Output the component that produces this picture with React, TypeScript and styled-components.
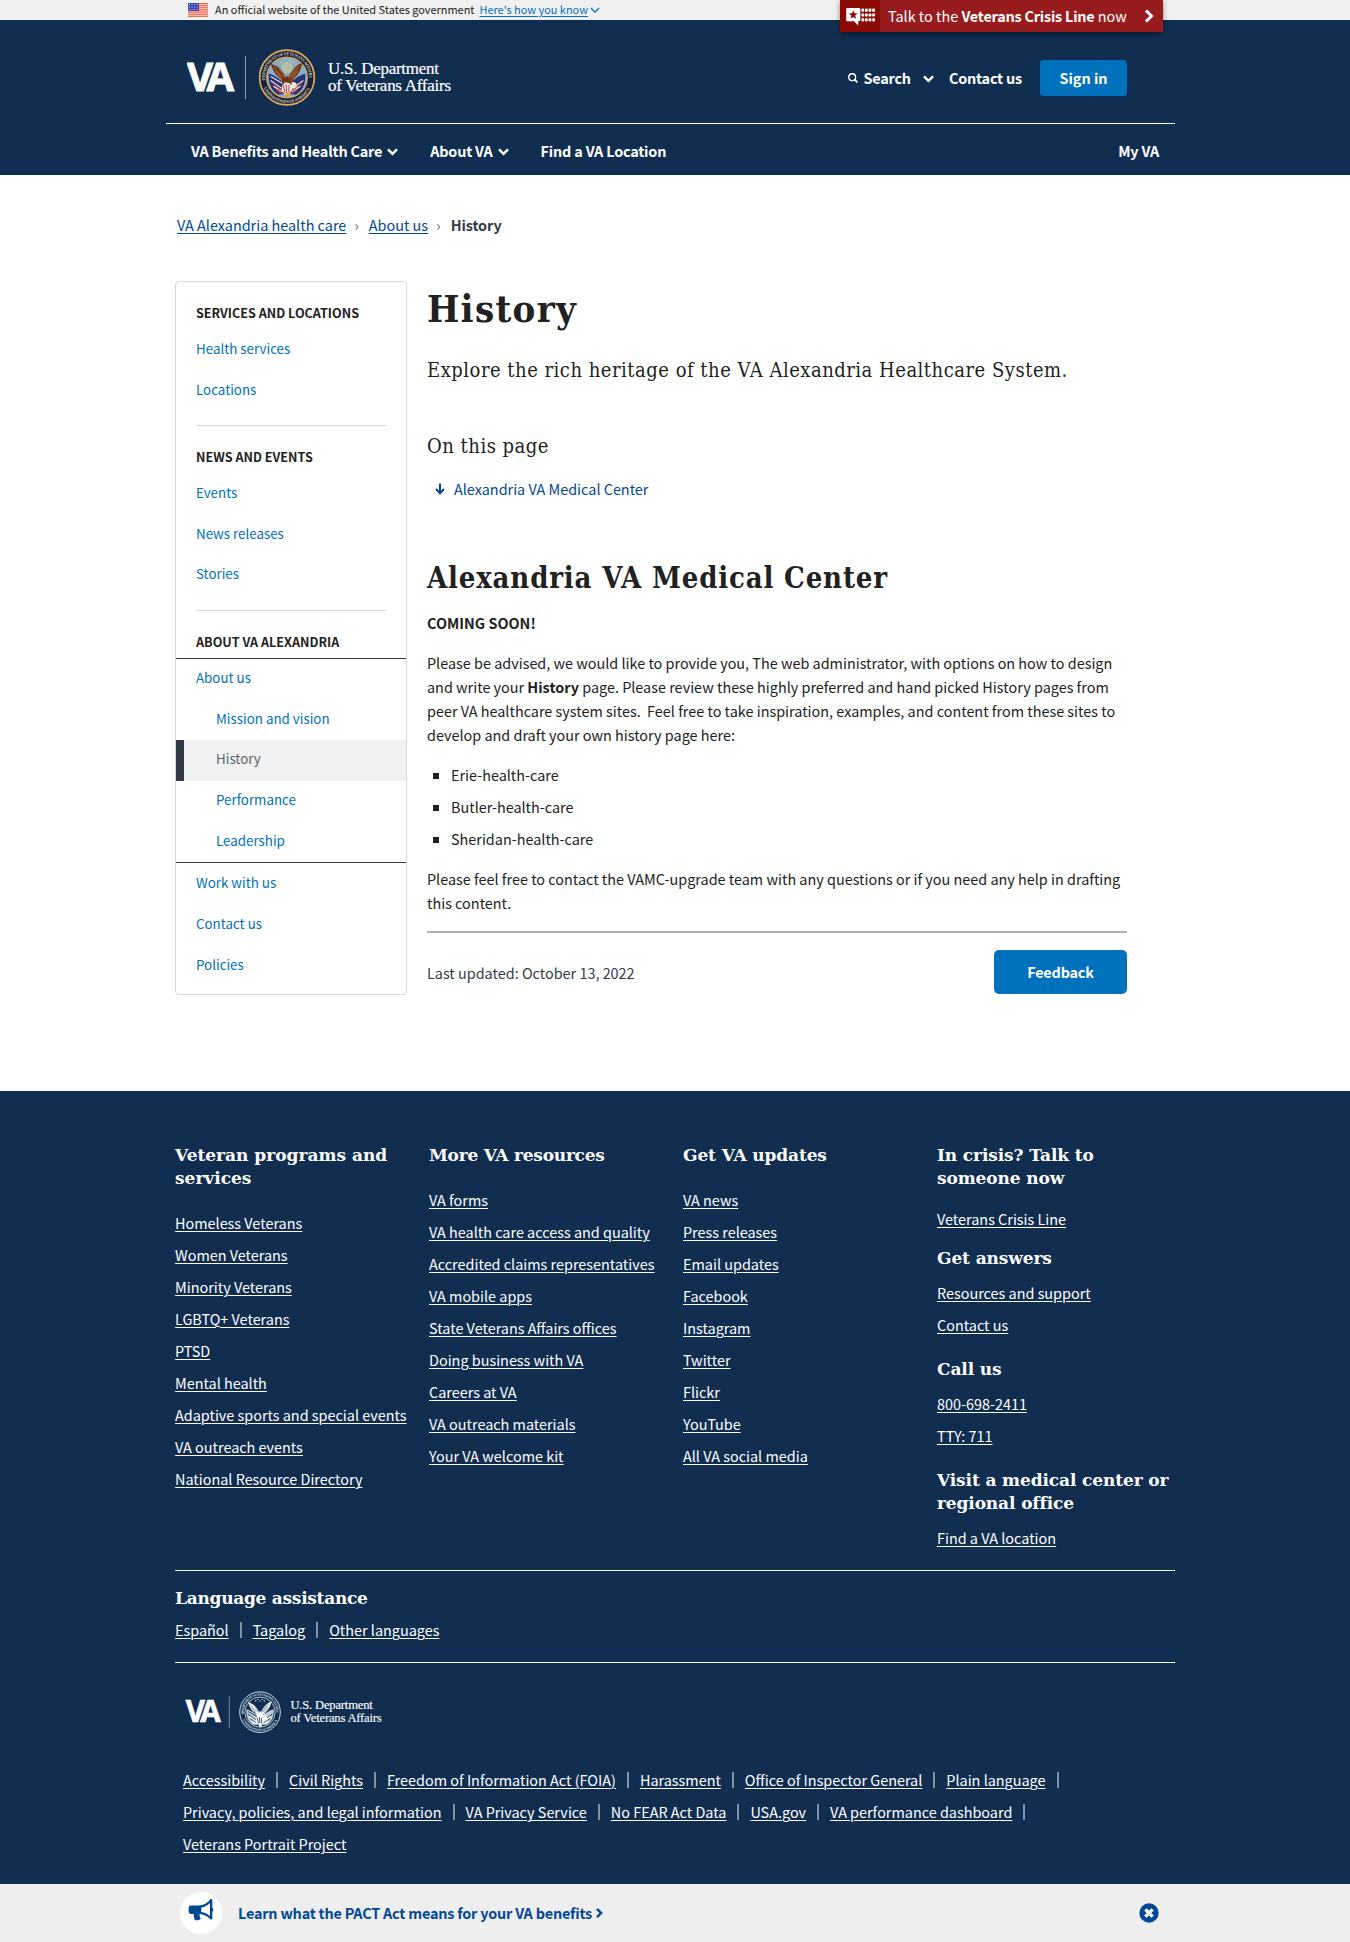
import React from 'react';
import styled, { createGlobalStyle } from 'styled-components';

const sans = '"Noto Sans CJK SC", "Noto Sans", sans-serif';
const slab = '"DejaVu Serif Condensed", "DejaVu Serif", serif';
const slabWide = '"DejaVu Serif", serif';

const GlobalStyle = createGlobalStyle`
  *, *::before, *::after { box-sizing: border-box; }
  body {
    margin: 0;
    background: #fff;
    color: #212121;
    font-family: ${sans};
    font-size: 14.42px;
    line-height: 24px;
  }
  h1, h2, h3, h4, p, ul { margin: 0; padding: 0; }
  ul { list-style: none; }
  svg { display: block; flex: none; }
`;

/* ---------- Government banner ---------- */

const GovBanner = styled.div`
  height: 20px;
  background: #f0f0f0;
  padding: 0 187px 0 188px;
  display: flex;
  align-items: flex-start;
  font-size: 10.95px;
  line-height: 19px;
`;

const GovText = styled.span`
  margin: 0 5px 0 7px;
`;

const GovLink = styled.a`
  color: #0071bc;
  text-decoration: underline;
  text-underline-offset: 2px;
  display: flex;
  align-items: center;
  gap: 2px;
`;

const FlagIcon = styled.svg`
  margin-top: 3px;
`;

const CrisisButton = styled.a`
  position: absolute;
  top: 0;
  left: 840px;
  width: 323px;
  height: 32px;
  display: flex;
  align-items: center;
  background: #981b1e;
  color: #fff;
  font-size: 14.42px;
  line-height: 30px;
  box-shadow: 0 2px 5px rgba(0, 0, 0, 0.45);
  b { letter-spacing: -0.21px; }
`;

const CrisisIconBox = styled.span`
  width: 40px;
  height: 32px;
  background: #8b0a03;
  display: flex;
  justify-content: center;
  align-items: center;
  margin-right: 8px;
`;

const CrisisText = styled.span`
  flex: 1;
  white-space: nowrap;
`;

const CrisisArrow = styled.svg`
  margin-right: 9px;
`;

/* ---------- Header ---------- */

const Header = styled.header`
  height: 155px;
  background: #112e51;
  color: #fff;
  padding: 0 175px 0 166px;
  font-weight: 700;
  letter-spacing: -0.19px;
`;

const HeaderTop = styled.div`
  height: 104px;
  border-bottom: 1px solid #fff;
  display: flex;
  justify-content: space-between;
  padding: 29px 48px 0 21px;
`;

const HeaderTools = styled.div`
  display: flex;
  align-items: center;
  height: 36px;
  margin-top: 11px;
`;

const SearchToggle = styled.span`
  display: flex;
  align-items: center;
  margin-right: 15px;
  span { margin: 0 12px 0 5px; }
`;

const SignIn = styled.button`
  width: 87px;
  height: 36px;
  margin-left: 18px;
  border: 0;
  border-radius: 4px;
  background: #0071bc;
  color: #fff;
  font: 700 14.42px/34px ${sans};
  padding: 0;
`;

const NavBar = styled.nav`
  display: flex;
  align-items: center;
  height: 51px;
  padding: 3px 16px 0 25px;
`;

const NavItem = styled.a<{ $gap?: number; $end?: boolean }>`
  display: flex;
  align-items: center;
  gap: 5px;
  margin-right: ${p => p.$gap ?? 0}px;
  margin-left: ${p => (p.$end ? 'auto' : '0')};
`;

/* ---------- Page body ---------- */

const Breadcrumbs = styled.nav`
  display: flex;
  height: 106px;
  padding: 38px 0 0 177px;
  a { color: #004795; text-decoration: underline; text-underline-offset: 2px; }
  i { font-style: normal; color: #5b616b; width: 22.5px; text-align: center; padding-right: 2px; }
  b { color: #323a45; letter-spacing: -0.1px; }
`;

const Body = styled.div`
  display: grid;
  grid-template-columns: 232px 700px;
  column-gap: 20px;
  align-items: start;
  padding: 0 0 96px 175px;
`;

const Sidebar = styled.aside`
  height: 714px;
  border: 1px solid #d6d7d9;
  border-radius: 4px;
  overflow: hidden;
`;

const SideSection = styled.section<{ $ruled?: boolean }>`
  padding: 20px 0 ${p => (p.$ruled ? 14.7 : 0)}px;
  &::after {
    content: '';
    display: ${p => (p.$ruled ? 'block' : 'none')};
    height: 1px;
    margin: 14.7px 20px -14.7px;
    background: #d6d7d9;
  }
`;

const SideHeading = styled.h2`
  font-size: 12.6px;
  line-height: 21px;
  margin: 0 20px 6px;
  font-weight: 700;
  white-space: nowrap;
`;

const SideItem = styled.a<{ $nested?: boolean; $current?: boolean }>`
  display: block;
  height: 40.7px;
  line-height: 39px;
  font-size: 13.35px;
  padding-left: ${p => (p.$current ? 32 : p.$nested ? 40 : 20)}px;
  color: ${p => (p.$current ? '#5b616b' : '#0071bc')};
  background: ${p => (p.$current ? '#f1f1f1' : 'transparent')};
  border-left: ${p => (p.$current ? '8px solid #323a45' : '0')};
`;

const SideGroup = styled.div`
  border-top: 1px solid #323a45;
  border-bottom: 1px solid #323a45;
  a { line-height: 38px; }
`;

const Article = styled.article`
  display: flex;
  flex-direction: column;
`;

const Title = styled.h1`
  font: 700 38px/52px ${slab};
  letter-spacing: 1.3px;
  margin-top: 2px;
`;

const Lede = styled.p<{ $top: number }>`
  font: 400 20px/30px ${slab};
  letter-spacing: 0.5px;
  margin-top: ${p => p.$top}px;
  white-space: nowrap;
`;

const JumpLink = styled.a`
  display: flex;
  align-items: center;
  gap: 9px;
  margin: 16px 0 0 8px;
  color: #004795;
`;

const SectionTitle = styled.h2`
  font: 700 29px/40px ${slab};
  letter-spacing: 0.83px;
  margin-top: 57px;
  white-space: nowrap;
`;

const Paragraph = styled.p<{ $top?: number }>`
  margin-top: ${p => p.$top ?? 16}px;
  white-space: nowrap;
`;

const BulletList = styled.ul`
  margin-top: 16px;
  display: flex;
  flex-direction: column;
  gap: 8px;
  li { display: flex; align-items: center; gap: 12px; padding-left: 6px; }
  li::before { content: ''; width: 6px; height: 6px; background: #212121; margin-top: 2px; }
`;

const Closing = styled.div`
  display: flex;
  justify-content: space-between;
  align-items: center;
  margin-top: 16px;
  padding-top: 17px;
  border-top: 2px solid #aeb0b5;
  color: #323a45;
  span { padding-top: 2px; }
`;

const FeedbackButton = styled.button`
  width: 133px;
  height: 44px;
  border: 0;
  border-radius: 5px;
  background: #0071bc;
  color: #fff;
  font: 700 14.42px/42px ${sans};
  letter-spacing: -0.19px;
  padding: 0;
`;

/* ---------- Footer ---------- */

const Footer = styled.footer`
  height: 793px;
  background: #112e51;
  color: #fff;
  padding: 53px 175px 0;
`;

const FooterGrid = styled.div`
  display: grid;
  grid-template-columns: 254px 254px 254px 238px;
  height: 426px;
`;

const FooterHeading = styled.h3<{ $top?: number; $spacing?: number }>`
  font: 700 17px/23px ${slabWide};
  letter-spacing: ${p => p.$spacing ?? -0.12}px;
  margin-top: ${p => p.$top ?? 0}px;
  white-space: nowrap;
`;

const LinkList = styled.ul<{ $top: number }>`
  display: flex;
  flex-direction: column;
  align-items: flex-start;
  gap: 8px;
  margin-top: ${p => p.$top}px;
`;

const FooterLink = styled.a`
  color: #fff;
  font-weight: 400;
  text-decoration: underline;
  text-underline-offset: 2px;
  text-decoration-thickness: 1px;
  white-space: nowrap;
`;

const LanguageBand = styled.section`
  height: 93px;
  border-top: 1px solid #fff;
  border-bottom: 1px solid #fff;
  padding-top: 16px;
`;

const InlineLinks = styled.ul<{ $top: number }>`
  display: flex;
  margin-top: ${p => p.$top}px;
  li { display: flex; align-items: center; }
`;

const Divider = styled.span`
  width: 2px;
  height: 16px;
  margin: 0 11px;
  background: #8292a6;
`;

const LegalLinks = styled.div`
  padding: 27px 0 0 8px;
  ul { margin: 0; height: 32px; }
`;

const FooterLogo = styled.div`
  padding: 28px 0 0 10px;
`;

/* ---------- Promo bar ---------- */

const PromoBar = styled.div`
  height: 58px;
  background: #eee;
  padding: 0 191px 0 180px;
  display: flex;
  align-items: center;
  color: #004795;
  font-weight: 700;
  letter-spacing: -0.2px;
`;

const PromoCircle = styled.span`
  width: 42px;
  height: 42px;
  border-radius: 50%;
  background: #fff;
  display: flex;
  align-items: center;
  justify-content: center;
  padding-bottom: 6px;
  margin-right: 16px;
`;

const PromoText = styled.a`
  flex: 1;
  display: flex;
  align-items: center;
  gap: 2px;
`;

/* ---------- Drawings ---------- */

const Chevron = ({ size = 10, weight = 2, dir = 'down' }: { size?: number; weight?: number; dir?: 'down' | 'right' }) => (
  <svg width={size} height={size} viewBox="0 0 10 10" fill="none" stroke="currentColor" strokeWidth={weight}>
    <path d={dir === 'down' ? 'M0.9 3 5 7.1 9.1 3' : 'M3 0.9 7.1 5 3 9.1'} />
  </svg>
);

const Flag = () => (
  <FlagIcon width="20" height="14" viewBox="0 0 20 14">
    <rect width="20" height="14" fill="#fff" />
    {[0, 1, 2, 3, 4, 5, 6].map(i => (
      <rect key={i} y={i * 2.1} width="20" height="1.3" fill="#ea5a3c" />
    ))}
    <rect width="11" height="8" fill="#3a45b5" />
    {[1.5, 4, 6.5].map(y =>
      [1.5, 4, 6.5, 9].map(x => <circle key={`${x}-${y}`} cx={x} cy={y} r="0.5" fill="#fff" />)
    )}
  </FlagIcon>
);

const ChatIcon = () => (
  <svg width="29" height="19" viewBox="0 0 29 19" fill="#fff">
    <path d="M1.5 1H13a1.3 1.3 0 0 1 1.3 1.3V13a1.3 1.3 0 0 1-1.3 1.3h-.8V18.5L8 14.3H1.5A1.3 1.3 0 0 1 .2 13V2.3A1.3 1.3 0 0 1 1.5 1Z" />
    <path fill="#8b0a03" d="m7.3 3.2 1.2 3.1 3.3.2-2.6 2.1.9 3.2-2.8-1.8-2.8 1.8.9-3.2L2.8 6.5l3.3-.2Z" />
    {[1.6, 6.4, 11.2].map(y =>
      [15.4, 19, 22.6, 26.2].map(x => <rect key={`${x}-${y}`} x={x} y={y} width="2.8" height="3.2" rx="0.8" />)
    )}
  </svg>
);

const Seal = ({ mono }: { mono?: boolean }) => {
  const id = mono ? 'mono' : 'color';
  const ring = mono ? '#dfe5ec' : '#e0a85a';
  const navy = mono ? '#112e51' : '#14203f';
  const letter = mono ? '#dfe5ec' : '#d8c9a0';
  const wing = mono ? '#fff' : '#6d3418';
  const wingLight = mono ? '#7f90a5' : '#a3602f';
  return (
    <g>
      <circle r="28.5" fill={navy} stroke={ring} strokeWidth={mono ? 1.3 : 1.8} />
      <path id={`top-${id}`} d="M-22.4 5A23 23 0 1 1 22.4 5" fill="none" />
      <path id={`low-${id}`} d="M-25.3 8A26.5 26.5 0 0 0 25.3 8" fill="none" />
      <g fill={letter} fontFamily="Liberation Serif, serif" fontWeight="700" fontSize="4.6" letterSpacing="0">
        <text textLength="76"><textPath href={`#top-${id}`} startOffset="2">DEPARTMENT OF VETERANS AFFAIRS</textPath></text>
        <text textLength="60"><textPath href={`#low-${id}`} startOffset="3">UNITED STATES OF AMERICA</textPath></text>
      </g>
      <circle r="21.2" fill={mono ? '#112e51' : '#86acc8'} stroke={ring} strokeWidth="1.1" />
      {!mono && <circle cy="-10" r="6" fill="#c5c99a" opacity="0.7" />}
      <g fill={mono ? '#fff' : '#e6cf62'}>
        {[[-6, -16], [-3, -18], [0, -15.5], [3, -18], [6, -16]].map(([x, y]) => (
          <circle key={x} cx={x} cy={y} r="0.9" />
        ))}
      </g>
      <path fill={mono ? '#c3ccd7' : '#27346f'} d="M-19-4C-14-3-8 1-3 6L-2 17-9 18C-16 14-20 6-19-4Z" />
      <path fill={mono ? '#c3ccd7' : '#27346f'} d="M19-4C14-3 8 1 3 6L2 17 9 18C16 14 20 6 19-4Z" />
      <path fill="none" stroke={mono ? '#112e51' : '#e6dfe6'} strokeWidth="1.3" d="M-17 3-6 11M-14 9-5 15M-17-1-5 6M17 3 6 11M14 9 5 15" />
      <path fill="none" stroke={mono ? '#fff' : '#b8344a'} strokeWidth="1.6" d="M-15 6-6 13M-11 13-4 17M15 6 6 13M11 13 4 17" />
      <path fill={wing} d="M-17-14C-15-10-14-4-7 1L-3 7 4 7 8 0C13-4 15-10 16-15 11-14 5-8 2-1L-2-1C-5-8-11-13-17-14Z" />
      <path fill="none" stroke={wingLight} strokeWidth="1.1" d="M-14-11-5 0M-12-7-5 3M-9-11-2 1M13-12 4 0M11-7 4 4M9-10 2 1" />
      <path fill={mono ? '#fff' : '#f0ebe2'} d="M5 5C9 4 11 7 10 10L7 12 4 9ZM-5 8-2 5 3 6 6 12 2 18-2 18-6 13Z" />
      <path fill="none" stroke={mono ? '#112e51' : '#c83b4e'} strokeWidth="1.1" d="M-4 8-2 16M-1 7 0 17M2 8 2 16" />
      <path fill={mono ? '#fff' : '#dba637'} d="M-2 16H2L3 20-1 20.5ZM9 8 12 9 9 11Z" />
    </g>
  );
};

const Logo = ({ mono }: { mono?: boolean }) => (
  <svg width={mono ? 202 : 270} height={mono ? 46 : 62} viewBox="0 0 270 62" fill="#fff">
    <text x="0" y="42" fontFamily="Open Sans, sans-serif" fontWeight="700" fontSize="40" letterSpacing="-6.4" stroke="#fff" strokeWidth="0.9">VA</text>
    <rect x="58" y="7" width="1" height="43" fill="#8fa0b5" />
    <g transform="translate(100 28.5) scale(0.96)"><Seal mono={mono} /></g>
    <g fontFamily="Liberation Serif, serif" fontWeight="400" fontSize="17" letterSpacing="0" stroke="#fff" strokeWidth="0.2">
      <text x="141" y="24.8" textLength="111">U.S. Department</text>
      <text x="141" y="42" textLength="123">of Veterans Affairs</text>
    </g>
  </svg>
);

/* ---------- Content ---------- */

const programs = ['Homeless Veterans', 'Women Veterans', 'Minority Veterans', 'LGBTQ+ Veterans', 'PTSD', 'Mental health', 'Adaptive sports and special events', 'VA outreach events', 'National Resource Directory'];
const resources = ['VA forms', 'VA health care access and quality', 'Accredited claims representatives', 'VA mobile apps', 'State Veterans Affairs offices', 'Doing business with VA', 'Careers at VA', 'VA outreach materials', 'Your VA welcome kit'];
const updates = ['VA news', 'Press releases', 'Email updates', 'Facebook', 'Instagram', 'Twitter', 'Flickr', 'YouTube', 'All VA social media'];
const legal = [
  ['Accessibility', 'Civil Rights', 'Freedom of Information Act (FOIA)', 'Harassment', 'Office of Inspector General', 'Plain language'],
  ['Privacy, policies, and legal information', 'VA Privacy Service', 'No FEAR Act Data', 'USA.gov', 'VA performance dashboard'],
  ['Veterans Portrait Project'],
];

const Links = ({ items, top }: { items: string[]; top: number }) => (
  <LinkList $top={top}>
    {items.map(t => <li key={t}><FooterLink>{t}</FooterLink></li>)}
  </LinkList>
);

const PipedLinks = ({ items, top = 0, trailing }: { items: string[]; top?: number; trailing?: boolean }) => (
  <InlineLinks $top={top}>
    {items.map((t, i) => (
      <li key={t}>
        <FooterLink>{t}</FooterLink>
        {(trailing || i < items.length - 1) && <Divider />}
      </li>
    ))}
  </InlineLinks>
);

export default function App() {
  return (
    <>
      <GlobalStyle />
      <GovBanner>
        <Flag />
        <GovText>An official website of the United States government</GovText>
        <GovLink>Here's how you know<Chevron size={10} weight={1.3} /></GovLink>
      </GovBanner>
      <CrisisButton>
        <CrisisIconBox><ChatIcon /></CrisisIconBox>
        <CrisisText>Talk to the <b>Veterans Crisis Line</b> now</CrisisText>
        <CrisisArrow width="10" height="14" viewBox="0 0 10 14" fill="none" stroke="#fff" strokeWidth="3">
          <path d="M2 1.5 7.5 7 2 12.5" />
        </CrisisArrow>
      </CrisisButton>

      <Header>
        <HeaderTop>
          <Logo />
          <HeaderTools>
            <SearchToggle>
              <svg width="10" height="10" viewBox="0 0 10 10" fill="none" stroke="#fff" strokeWidth="1.4">
                <circle cx="4.2" cy="4.2" r="3.4" />
                <path d="M6.7 6.7 9.4 9.4" strokeWidth="1.8" />
              </svg>
              <span>Search</span>
              <Chevron size={11} weight={2.2} />
            </SearchToggle>
            <a>Contact us</a>
            <SignIn>Sign in</SignIn>
          </HeaderTools>
        </HeaderTop>
        <NavBar>
          <NavItem $gap={32}>VA Benefits and Health Care<Chevron size={11} weight={2.2} /></NavItem>
          <NavItem $gap={32}>About VA<Chevron size={11} weight={2.2} /></NavItem>
          <NavItem>Find a VA Location</NavItem>
          <NavItem $end>My VA</NavItem>
        </NavBar>
      </Header>

      <Breadcrumbs>
        <a>VA Alexandria health care</a><i>›</i>
        <a>About us</a><i>›</i>
        <b>History</b>
      </Breadcrumbs>

      <Body>
        <Sidebar>
          <SideSection $ruled>
            <SideHeading>SERVICES AND LOCATIONS</SideHeading>
            <SideItem>Health services</SideItem>
            <SideItem>Locations</SideItem>
          </SideSection>
          <SideSection $ruled>
            <SideHeading>NEWS AND EVENTS</SideHeading>
            <SideItem>Events</SideItem>
            <SideItem>News releases</SideItem>
            <SideItem>Stories</SideItem>
          </SideSection>
          <SideSection>
            <SideHeading>ABOUT VA ALEXANDRIA</SideHeading>
            <SideGroup>
              <SideItem>About us</SideItem>
              <SideItem $nested>Mission and vision</SideItem>
              <SideItem $nested $current>History</SideItem>
              <SideItem $nested>Performance</SideItem>
              <SideItem $nested>Leadership</SideItem>
            </SideGroup>
            <SideItem>Work with us</SideItem>
            <SideItem>Contact us</SideItem>
            <SideItem>Policies</SideItem>
          </SideSection>
        </Sidebar>

        <Article>
          <Title>History</Title>
          <Lede $top={20}>Explore the rich heritage of the VA Alexandria Healthcare System.</Lede>
          <Lede $top={46}>On this page</Lede>
          <JumpLink>
            <svg width="10" height="12" viewBox="0 0 10 12" fill="none" stroke="currentColor" strokeWidth="2">
              <path d="M5 0.5V10.5M1 6 5 10.3 9 6" />
            </svg>
            Alexandria VA Medical Center
          </JumpLink>
          <SectionTitle>Alexandria VA Medical Center</SectionTitle>
          <Paragraph $top={13}><b>COMING SOON!</b></Paragraph>
          <Paragraph>
            Please be advised, we would like to provide you, The web administrator, with options on how to design<br />
            and write your <b>History</b> page. Please review these highly preferred and hand picked History pages from<br />
            peer VA healthcare system sites.&nbsp; Feel free to take inspiration, examples, and content from these sites to<br />
            develop and draft your own history page here:
          </Paragraph>
          <BulletList>
            <li>Erie-health-care</li>
            <li>Butler-health-care</li>
            <li>Sheridan-health-care</li>
          </BulletList>
          <Paragraph>
            Please feel free to contact the VAMC-upgrade team with any questions or if you need any help in drafting<br />
            this content.
          </Paragraph>
          <Closing>
            <span>Last updated: October 13, 2022</span>
            <FeedbackButton>Feedback</FeedbackButton>
          </Closing>
        </Article>
      </Body>

      <Footer>
        <FooterGrid>
          <div>
            <FooterHeading $spacing={0}>Veteran programs and<br />services</FooterHeading>
            <Links items={programs} top={21} />
          </div>
          <div>
            <FooterHeading $spacing={-0.23}>More VA resources</FooterHeading>
            <Links items={resources} top={21} />
          </div>
          <div>
            <FooterHeading>Get VA updates</FooterHeading>
            <Links items={updates} top={21} />
          </div>
          <div>
            <FooterHeading>In crisis? Talk to<br />someone now</FooterHeading>
            <Links items={['Veterans Crisis Line']} top={17} />
            <FooterHeading $top={16}>Get answers</FooterHeading>
            <Links items={['Resources and support', 'Contact us']} top={11} />
            <FooterHeading $top={21}>Call us</FooterHeading>
            <Links items={['800-698-2411', 'TTY: 711']} top={11} />
            <FooterHeading $top={21}>Visit a medical center or<br />regional office</FooterHeading>
            <Links items={['Find a VA location']} top={11} />
          </div>
        </FooterGrid>
        <LanguageBand>
          <FooterHeading $spacing={-0.27}>Language assistance</FooterHeading>
          <PipedLinks items={['Español', 'Tagalog', 'Other languages']} top={8} />
        </LanguageBand>
        <FooterLogo><Logo mono /></FooterLogo>
        <LegalLinks>
          <PipedLinks items={legal[0]} trailing />
          <PipedLinks items={legal[1]} trailing />
          <PipedLinks items={legal[2]} />
        </LegalLinks>
      </Footer>

      <PromoBar>
        <PromoCircle>
          <svg width="26" height="24" viewBox="0 0 26 24" fill="#004795">
            <path fillRule="evenodd" d="M3 7.5H11C15 7.3 19 5.5 22.6 1.2 23.6.9 24.3 1.4 24.3 2.3V9.8C25.7 10.6 25.7 13.2 24.3 14V20.4C24.3 21.5 23.2 21.9 22.3 21.2 19 18 15.5 16.3 11.6 16 11.2 17.6 12 19 12.6 20.4 11.8 22.3 9.2 22.5 6.8 22 6.2 20 5.4 18.2 5.8 16H3C1.6 16 .6 15 .6 13.6V9.9C.6 8.5 1.6 7.5 3 7.5ZM13.3 9.7V14C16.6 14.5 19.4 15.8 22 18V5C19.4 7.4 16.6 9.1 13.3 9.7Z" />
          </svg>
        </PromoCircle>
        <PromoText>Learn what the PACT Act means for your VA benefits<Chevron size={10} weight={2.4} dir="right" /></PromoText>
        <svg width="20" height="20" viewBox="0 0 20 20">
          <circle cx="10" cy="10" r="9.7" fill="#004795" />
          <path d="M6.4 6.4 13.6 13.6M13.6 6.4 6.4 13.6" stroke="#fff" strokeWidth="3.4" />
        </svg>
      </PromoBar>
    </>
  );
}
